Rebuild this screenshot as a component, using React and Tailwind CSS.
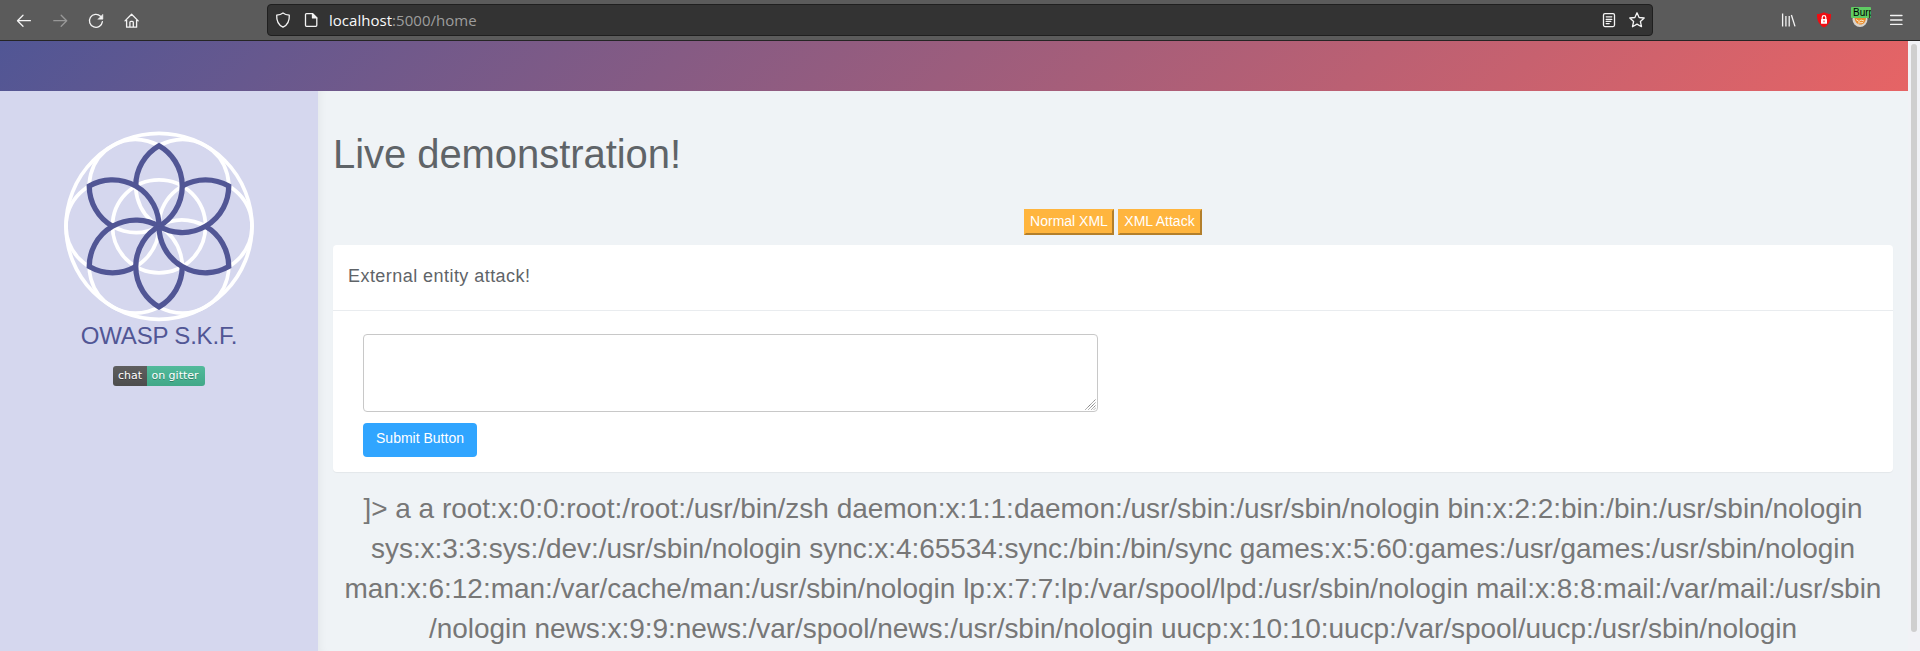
import React from "react";

const ANGLES = [0, 60, 120, 180, 240, 300];

const OUTPUT_LINES = [
  {
    text: "]> a a root:x:0:0:root:/root:/usr/bin/zsh daemon:x:1:1:daemon:/usr/sbin:/usr/sbin/nologin bin:x:2:2:bin:/bin:/usr/sbin/nologin",
    tracking: "tracking-[-0.016px]",
  },
  {
    text: "sys:x:3:3:sys:/dev:/usr/sbin/nologin sync:x:4:65534:sync:/bin:/bin/sync games:x:5:60:games:/usr/games:/usr/sbin/nologin",
    tracking: "tracking-[-0.06px]",
  },
  {
    text: "man:x:6:12:man:/var/cache/man:/usr/sbin/nologin lp:x:7:7:lp:/var/spool/lpd:/usr/sbin/nologin mail:x:8:8:mail:/var/mail:/usr/sbin",
    tracking: "tracking-[-0.018px]",
  },
  {
    text: "/nologin news:x:9:9:news:/var/spool/news:/usr/sbin/nologin uucp:x:10:10:uucp:/var/spool/uucp:/usr/sbin/nologin",
    tracking: "tracking-[-0.045px]",
  },
];

function Icon({ className = "", children }) {
  return (
    <svg
      width="16"
      height="16"
      viewBox="0 0 16 16"
      fill="none"
      stroke="#f4f4f4"
      strokeWidth="1.3"
      strokeLinecap="round"
      strokeLinejoin="round"
      className={"shrink-0 " + className}
    >
      {children}
    </svg>
  );
}

function Toolbar() {
  return (
    <div className="flex h-[41px] shrink-0 items-start border-b border-[#252525] bg-[#5b5b5b]">
      <div className="flex w-[267px] gap-5 pl-4 pt-[13px]">
        <Icon>
          <path d="M14.4 7.7H1.8M7 2.2 1.5 7.7 7 13.2" />
        </Icon>
        <Icon className="opacity-40">
          <path d="M1.8 7.7h12.6M9.2 2.2l5.5 5.5-5.5 5.5" />
        </Icon>
        <Icon>
          <path d="M12.5 3.2A6.5 6.5 0 1 0 14.4 8.6" />
          <path d="M14.9 1.6v4.6h-4.8z" fill="#f4f4f4" strokeWidth="0.5" />
        </Icon>
        <Icon>
          <path d="M1 7.9 7.6 1.3l6.6 6.6M2.6 7v7.2h10V7M5.9 14V9.3a1 1 0 0 1 1-1h1.4a1 1 0 0 1 1 1V14" />
        </Icon>
      </div>
      <div className="mt-1 flex h-8 w-[1386px] items-center rounded-[4px] border border-[#1f1f1f] bg-[#333333] pl-[7px] pr-[7px]">
        <Icon>
          <path d="M8 .9c2 1.5 4 2 6.3 2.3.3 5.600-1.800 9.800-6.300 12C3.500 13 1.400 8.800 1.700 3.200 4 2.900 6 2.400 8 .9z" />
        </Icon>
        <Icon className="ml-3">
          <path d="M3.500 1.600h6l4.300 4.300v7.400a1 1 0 0 1-1 1H3.500a1 1 0 0 1-1-1V2.600a1 1 0 0 1 1-1z" />
          <path d="M9.500 1.600v4.300h4.300z" fill="#f4f4f4" />
        </Icon>
        <span className="ml-[10px] whitespace-nowrap font-['Open_Sans',sans-serif] text-[15px] leading-[20px] tracking-[0.03px] text-[#9d9d9d]">
          <span className="text-[#f9f9fa]">localhost</span>:5000/home
        </span>
        <Icon className="ml-auto">
          <rect x="2.500" y="1.600" width="11" height="13" rx="1.500" />
          <path d="M5.200 4.800h5.600M5.200 7.400h5.600M5.200 9.400h4.600M5.200 11.600h3" />
        </Icon>
        <Icon className="ml-3">
          <path d="M8 .8l2.100 4.700 5.100.5-3.800 3.500 1.100 5.200L8 12.100l-4.500 2.600 1.100-5.200L.8 6l5.100-.5z" />
        </Icon>
      </div>
      <div className="ml-[127px] flex gap-5 pt-3">
        <Icon>
          <path d="M2.600 1.600v13M5.900 4v10.600M9.200 4v10.600M11.400 3l3.600 11.400" strokeLinecap="butt" />
        </Icon>
        <svg width="16" height="16" viewBox="0 0 16 16" className="shrink-0">
          <path d="M8 .2c2 1.200 4.500 1.700 7 1.900.3 6-1.800 10.800-7 13.500C2.800 12.900.7 8.100 1 2.100 3.500 1.900 6 1.400 8 .2z" fill="#ef0d12" />
          <rect x="5" y="7" width="6" height="4.800" rx=".5" fill="#fff" />
          <path d="M6.200 7V5.500a1.800 1.800 0 0 1 3.600 0V7" fill="none" stroke="#fff" strokeWidth="1.200" />
          <path d="M8 8.500v1.700" stroke="#ef0d12" />
        </svg>
        <div className="relative h-4 w-4">
          <svg width="16" height="16" viewBox="0 0 16 16">
            <circle cx="8" cy="7.500" r="7.500" fill="#d8d3cc" />
            <path d="M2.500 5h11.500c0 5-2.500 7.500-5.500 7.500S2.500 10 2.500 5z" fill="#e98b2d" />
            <path d="M4 7.500l3 2 2-1.500 3 1M6 11l5-.5" stroke="#fbe3bd" fill="none" />
          </svg>
          <span className="absolute -left-px -top-[5px] h-[11px] w-5 overflow-hidden rounded-[1px] bg-[#5fcb63] pl-[2px] font-['Liberation_Sans',sans-serif] text-[10px] leading-[11px] text-black">
            Burp
          </span>
        </div>
        <Icon>
          <path d="M2.600 3.500h11.400M2.600 8h11.400M2.600 12.400h11.400" />
        </Icon>
      </div>
    </div>
  );
}

function FlowerLogo() {
  return (
    <svg width="192" height="192" viewBox="-96 -96.300 192 192" fill="none">
      <g stroke="#ffffff" strokeWidth="3.700">
        <circle r="93" />
        <circle r="46.500" />
        {ANGLES.map((a) => (
          <circle key={a} cx="46.500" r="46.500" transform={`rotate(${a})`} />
        ))}
      </g>
      <g stroke="#515695" strokeWidth="5.300">
        {ANGLES.map((a) => (
          <path
            key={a}
            d="M-23.250-40.270A46.500 46.500 0 0 1 0-80.540A46.500 46.500 0 0 1 0 0"
            transform={`rotate(${a})`}
          />
        ))}
      </g>
    </svg>
  );
}

function Sidebar() {
  return (
    <aside className="flex w-[318px] shrink-0 flex-col items-center bg-[#d5d7ee] pt-[39px]">
      <FlowerLogo />
      <div className="-mt-[2px] whitespace-nowrap text-[24px] leading-[32px] tracking-[-0.2px] text-[#515695]">OWASP S.K.F.</div>
      <div className="mt-[14px] flex h-5 overflow-hidden rounded-[3px] font-['DejaVu_Sans',sans-serif] text-[11px] leading-[20px] text-white [text-shadow:0_1px_0_rgba(1,1,1,0.3)]">
        <span className="w-[34px] bg-linear-to-b from-[#5f5f5f] to-[#4d4d4d] text-center">chat</span>
        <span className="w-[58px] bg-linear-to-b from-[#52ba9b] to-[#41a888] pr-[2px] text-center">on gitter</span>
      </div>
    </aside>
  );
}

function SmallButton({ className, children }) {
  return (
    <button
      className={
        "h-[26px] whitespace-nowrap border-2 border-t-[#ffb53e] border-l-[#ffb53e] border-b-[#b37f2b] border-r-[#b37f2b] bg-[#ffb53e] pb-[2px] text-center text-[14px] leading-[20px] text-white " +
        className
      }
    >
      {children}
    </button>
  );
}

function Content() {
  return (
    <main className="min-w-0 grow bg-[#eff3f6] px-[15px] shadow-[inset_8px_0_8px_-6px_rgba(0,0,0,0.05)]">
      <h1 className="pt-[40px] whitespace-nowrap text-[40px] leading-[46px] tracking-[-0.06px] text-[#5f6468]">Live demonstration!</h1>
      <div className="mt-[32px] flex justify-center gap-1">
        <SmallButton className="w-[90px]">Normal XML</SmallButton>
        <SmallButton className="w-[84px] pr-px">XML Attack</SmallButton>
      </div>
      <section className="mt-[10px] h-[227px] rounded-[4px] bg-white shadow-[0_1px_1px_rgba(0,0,0,0.05)]">
        <div className="h-[66px] border-b border-[#e9ecef] pl-[15px] pt-[16px] text-[18px] leading-[30px] tracking-[0.45px] text-[#5f6468]">
          External entity attack!
        </div>
        <div className="flex flex-col items-start pl-[30px] pt-[23px]">
          <div className="flex h-[78px] w-[735px] items-end justify-end rounded-[4px] border border-[#c8c8c8] bg-white p-px">
            <svg width="11" height="11" viewBox="0 0 11 11" stroke="#6f6f6f" strokeWidth="1" strokeDasharray="1.200 0.500">
              <path d="M.5 10.500l10-10M3.500 10.500l7-7M6.500 10.500l4-4M9 10.500l1.500-1.500" />
            </svg>
          </div>
          <button className="mt-[11px] h-[34px] w-[114px] rounded-[4px] bg-[#30a5ff] pb-[4px] text-center text-[14px] leading-[20px] text-white">
            Submit Button
          </button>
        </div>
      </section>
      <div className="mt-[17px] flex flex-col items-center text-[28px] leading-[40px] text-[#777777]">
        {OUTPUT_LINES.map((line) => (
          <div key={line.text} className={"whitespace-nowrap " + line.tracking}>
            {line.text}
          </div>
        ))}
      </div>
    </main>
  );
}

export default function App() {
  return (
    <div className="flex h-[651px] w-[1920px] flex-col overflow-hidden bg-[#eff3f6] font-['Liberation_Sans',Arial,sans-serif]">
      <Toolbar />
      <div className="flex min-h-0 grow">
        <div className="flex w-[1908px] flex-col">
          <header className="h-[50px] shrink-0 bg-linear-[135deg] from-[#515695] to-[#e66465]" />
          <div className="flex min-h-0 grow">
            <Sidebar />
            <Content />
          </div>
        </div>
        <div className="w-3 bg-[#f1f2f6] pl-[3px] pt-[3px]">
          <div className="h-[588px] w-[6px] rounded-full bg-[#cfcfcf]" />
        </div>
      </div>
    </div>
  );
}
